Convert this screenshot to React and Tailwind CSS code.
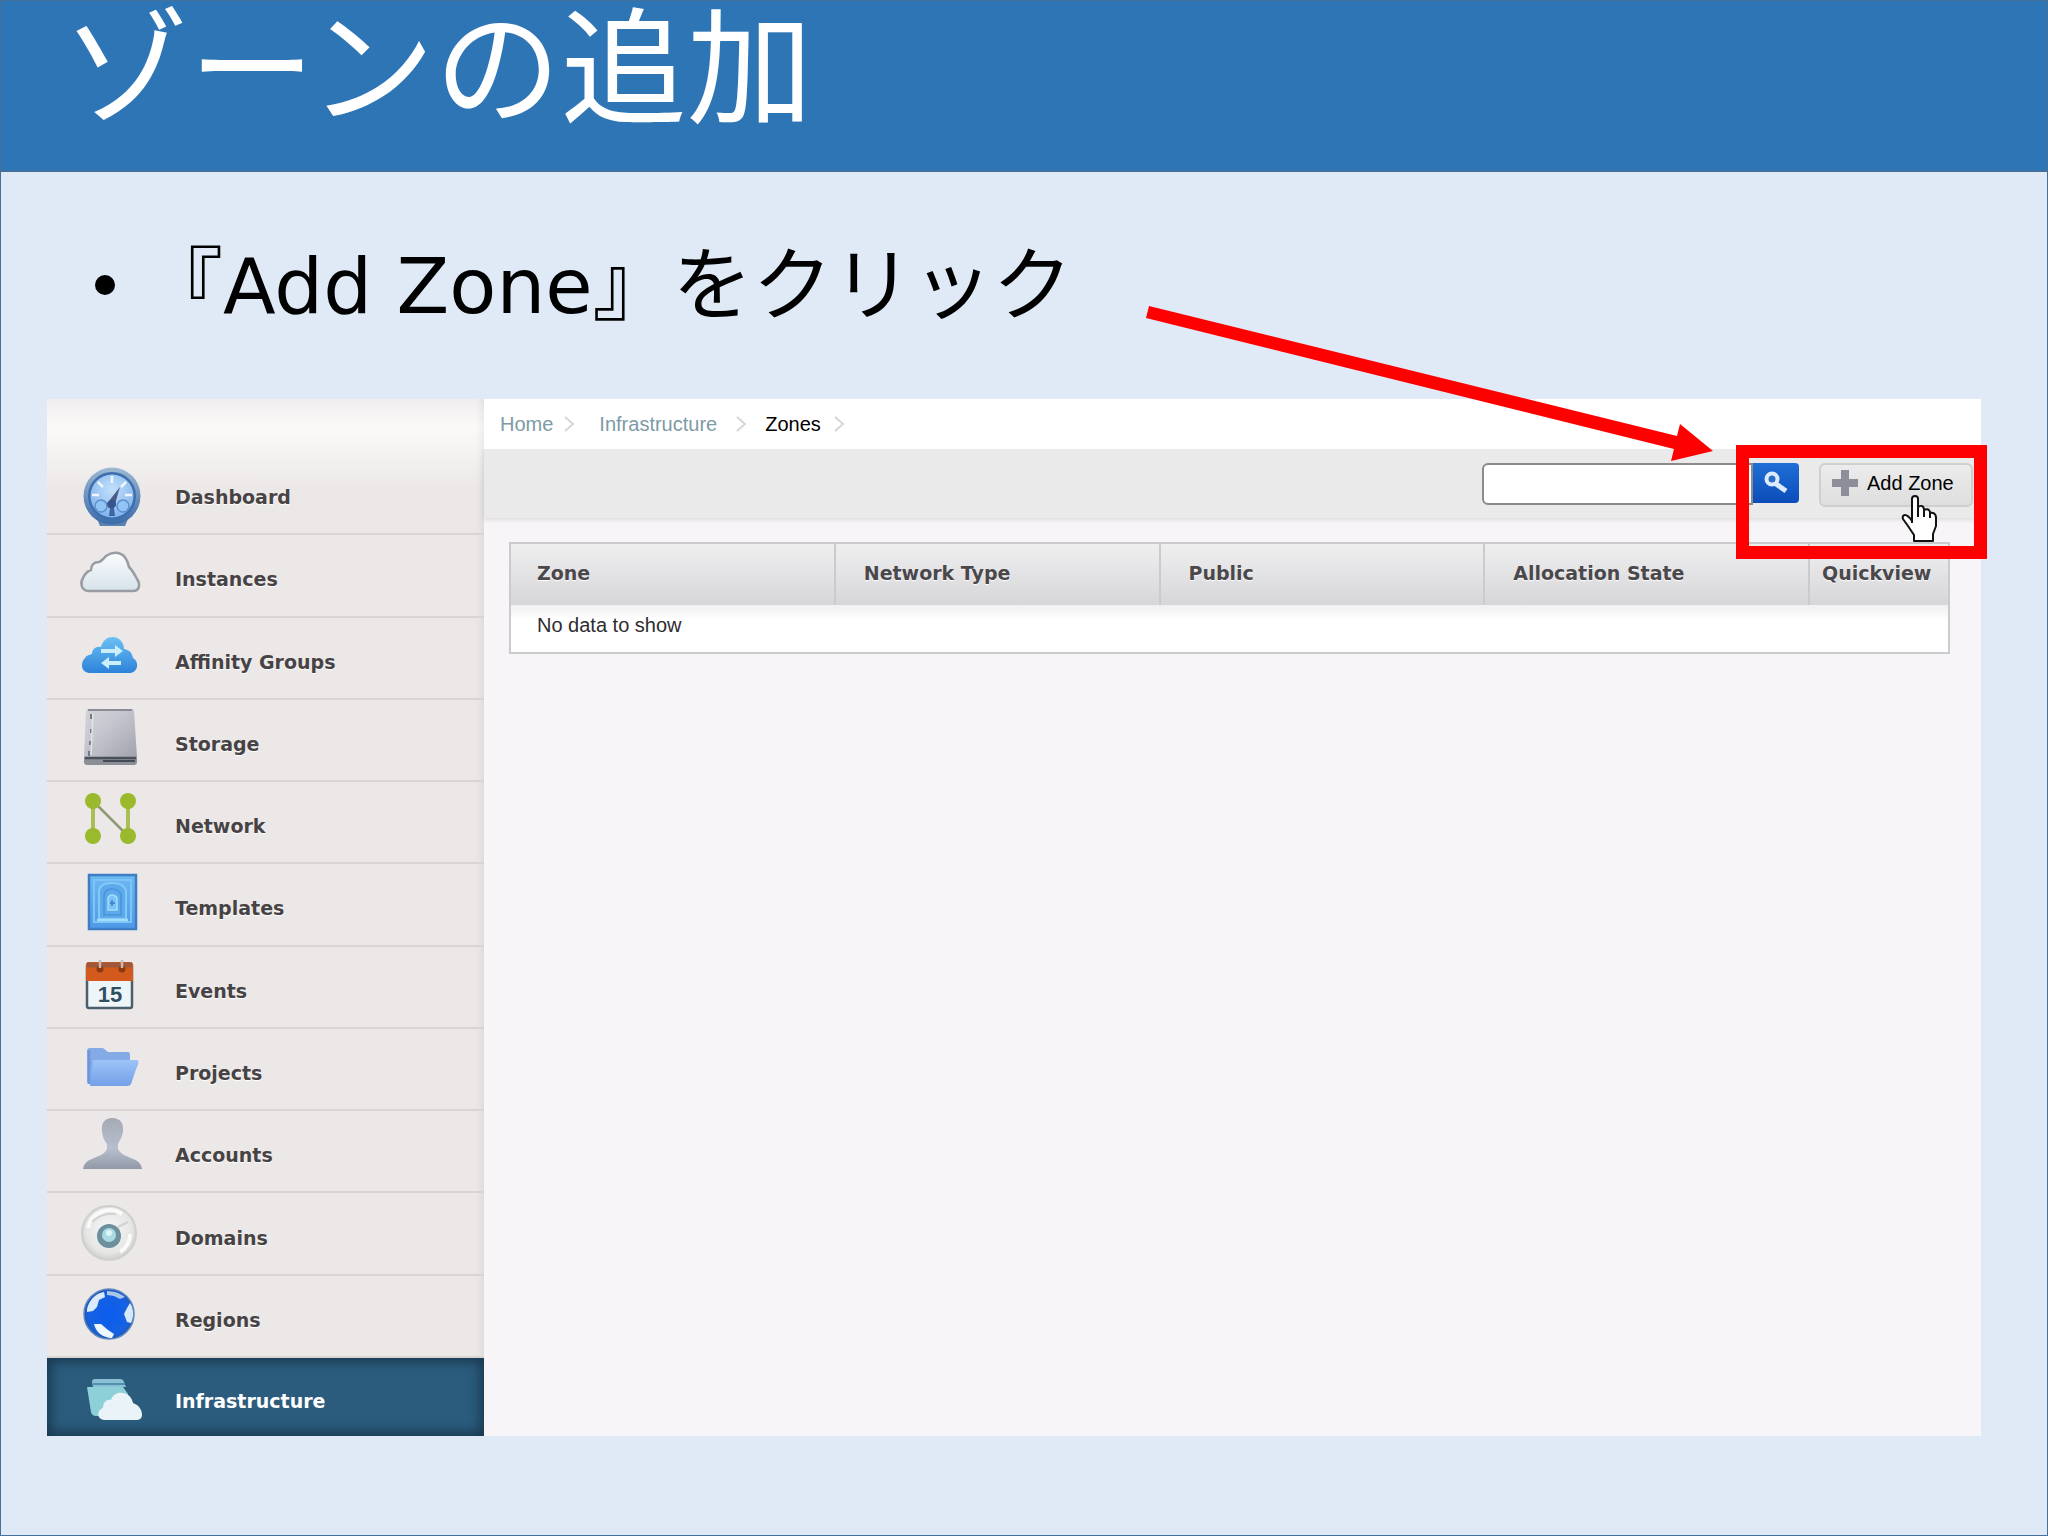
// slide: adding a zone from the CloudStack console

const menu = [
  { label: "Dashboard", Icon: DashboardIcon },
  { label: "Instances", Icon: InstancesIcon },
  { label: "Affinity Groups", Icon: AffinityIcon },
  { label: "Storage", Icon: StorageIcon },
  { label: "Network", Icon: NetworkIcon },
  { label: "Templates", Icon: TemplatesIcon },
  { label: "Events", Icon: EventsIcon },
  { label: "Projects", Icon: ProjectsIcon },
  { label: "Accounts", Icon: AccountsIcon },
  { label: "Domains", Icon: DomainsIcon },
  { label: "Regions", Icon: RegionsIcon },
  { label: "Infrastructure", Icon: InfrastructureIcon, active: true },
];

function IconBox({ children }) {
  return (
    <svg
      viewBox="0 0 64 64"
      className="size-16 shrink-0 overflow-visible"
      aria-hidden="true"
    >
      {children}
    </svg>
  );
}

function DashboardIcon() {
  return (
    <IconBox>
      <defs>
        <linearGradient id="dashRim" x1="0" y1="0" x2="0" y2="1">
          <stop offset="0" stopColor="#9db9d3" />
          <stop offset="1" stopColor="#3a6ba8" />
        </linearGradient>
        <radialGradient id="dashFace" cx="0.5" cy="0.35" r="0.7">
          <stop offset="0" stopColor="#c3e0fc" />
          <stop offset="1" stopColor="#7fb0ea" />
        </radialGradient>
      </defs>
      <path d="M18 58h31l-3 7H21z" fill="#5b82ae" />
      <circle cx="33" cy="35" r="28.5" fill="url(#dashRim)" />
      <circle cx="33" cy="35" r="24" fill="#3d6fae" />
      <circle cx="33" cy="35" r="21.5" fill="url(#dashFace)" />
      <g stroke="#eef7ff" strokeWidth="2.5">
        <path d="M33 15v7M19 21l5 5M47 21l-5 5M13 34h7M53 34h-7" />
      </g>
      <circle cx="22" cy="45" r="6" fill="#92c3f5" stroke="#5b8ecb" strokeWidth="1.5" />
      <circle cx="44" cy="45" r="6" fill="#92c3f5" stroke="#5b8ecb" strokeWidth="1.5" />
      <path d="M41 26l-5 17a4 4 0 1 1-6-3z" fill="#4c5c86" />
      <circle cx="33" cy="43" r="4" fill="#33568f" />
      <path d="M31 47h4l1 8h-6z" fill="#3a66a5" />
    </IconBox>
  );
}

function InstancesIcon() {
  return (
    <IconBox>
      <defs>
        <linearGradient id="cloudFill" x1="0" y1="0" x2="0" y2="1">
          <stop offset="0" stopColor="#fbfcfd" />
          <stop offset="1" stopColor="#d5e3ea" />
        </linearGradient>
      </defs>
      <path
        d="M9 48C2 47 1 40 4 35c2-5 5-7 8-8 0-5 3-8 8-8 3-1 5-4 7-6 8-6 17-3 20 3 2 3 2 5 3 8 4 4 6 8 8 12 4 6 2 12-4 12z"
        fill="url(#cloudFill)"
        stroke="#999ca2"
        strokeWidth="2.5"
        strokeLinejoin="round"
      />
    </IconBox>
  );
}

function AffinityIcon() {
  return (
    <IconBox>
      <defs>
        <linearGradient id="affFill" x1="0" y1="0" x2="0" y2="1">
          <stop offset="0" stopColor="#6cc0f3" />
          <stop offset="1" stopColor="#2d82da" />
        </linearGradient>
      </defs>
      <path
        d="M10 47C2 46 1 37 6 32c2-3 4-3 7-4 0-5 4-8 9-7 2-7 6-10 12-10s11 5 11 12c6 1 8 4 9 9 6 3 6 14-3 15z"
        fill="url(#affFill)"
      />
      <path
        d="M22 23h14v-4l8 6-8 6v-4H22zM42 35H30v-4l-8 6 8 6v-4h12z"
        fill="#c9eefc"
      />
    </IconBox>
  );
}

function StorageIcon() {
  return (
    <IconBox>
      <defs>
        <linearGradient id="diskFill" x1="0" y1="0" x2="1" y2="1">
          <stop offset="0" stopColor="#d2d2d8" />
          <stop offset="0.35" stopColor="#c9c9d2" />
          <stop offset="1" stopColor="#a2a3ae" />
        </linearGradient>
      </defs>
      <path d="M5 48h53v6q0 3-3 3H8q-3 0-3-3z" fill="#8c8f97" />
      <path d="M9 1h44q2 0 2 2l3 46H5L7 3q0-2 2-2z" fill="url(#diskFill)" />
      <path d="M9 2h44" stroke="#8c8d94" strokeWidth="2" />
      <path d="M6 50h51" stroke="#4b515a" strokeWidth="2.5" />
      <path d="M24 53h32" stroke="#444b56" strokeWidth="2" />
      <path d="M12 6v5M12 21v4M11 33v4M10 43v5" stroke="#777982" strokeWidth="2" />
      <path d="M14 5l-2 42" stroke="#e2e2e7" strokeWidth="1.5" />
    </IconBox>
  );
}

function NetworkIcon() {
  return (
    <IconBox>
      <path d="M14 11v35M49 11v35" stroke="#a9bf55" strokeWidth="4" />
      <path d="M14 11l35 35" stroke="#8e9a74" strokeWidth="2.5" />
      <g fill="#9ab92c">
        <circle cx="14" cy="11" r="8" />
        <circle cx="49" cy="11" r="8" />
        <circle cx="14" cy="46" r="8" />
        <circle cx="49" cy="46" r="8" />
      </g>
    </IconBox>
  );
}

function TemplatesIcon() {
  return (
    <IconBox>
      <defs>
        <linearGradient id="tplFill" x1="0" y1="0" x2="0" y2="1">
          <stop offset="0" stopColor="#6bb9f2" />
          <stop offset="1" stopColor="#4f9ae8" />
        </linearGradient>
      </defs>
      <rect x="10" y="3" width="47" height="54" fill="url(#tplFill)" stroke="#3e7cc4" strokeWidth="2.5" />
      <rect x="15" y="8" width="37" height="42" fill="none" stroke="#7fc4f6" strokeWidth="2" />
      <path d="M20 47V19q1-8 13-8t14 8v28z" fill="#5ca9ec" stroke="#84c8f6" strokeWidth="2" />
      <path d="M25 43V23q1-6 8-6t9 6v20z" fill="none" stroke="#4a92da" strokeWidth="1.5" />
      <path d="M29 38V26q1-3 4-3t5 3v12z" fill="#79c4f6" stroke="#a5dcfa" strokeWidth="1.5" />
      <path d="M33 28v6M31 31h5" stroke="#3c7dc8" strokeWidth="1.5" />
      <path d="M18 48h31" stroke="#a2ddfb" strokeWidth="2.5" />
    </IconBox>
  );
}

function EventsIcon() {
  return (
    <IconBox>
      <rect x="8" y="9" width="45" height="44" rx="2" fill="#eef5f8" stroke="#4a5e6c" strokeWidth="2.5" />
      <path d="M7 26V10q0-3 3-3h41q3 0 3 3v16z" fill="#d35a1c" />
      <path d="M8 10h45" stroke="#a1583a" strokeWidth="5" />
      <circle cx="21" cy="14" r="3.5" fill="#8c3a14" />
      <circle cx="43" cy="14" r="3.5" fill="#8c3a14" />
      <path d="M21 5v8M43 5v8" stroke="#c9b9b2" strokeWidth="2.5" />
      <text
        x="31"
        y="47"
        textAnchor="middle"
        fill="#2f4f63"
        className="font-['Liberation_Sans',sans-serif] text-[22px] font-bold"
      >
        15
      </text>
    </IconBox>
  );
}

function ProjectsIcon() {
  return (
    <IconBox>
      <defs>
        <linearGradient id="folderFill" x1="0" y1="0" x2="0" y2="1">
          <stop offset="0" stopColor="#9cc4f7" />
          <stop offset="1" stopColor="#74a0e8" />
        </linearGradient>
      </defs>
      <path d="M8 14q0-3 3-3h13l5 4h20q2 0 2 3v6h6q3 0 2 3l-8 20H11q-3 0-3-3z" fill="#84abe6" />
      <path d="M14 23h44q2 0 1 3l-7 21q-1 2-4 2H11z" fill="url(#folderFill)" />
      <path d="M10 13v34" stroke="#6d96dc" strokeWidth="2.5" />
    </IconBox>
  );
}

function AccountsIcon() {
  return (
    <IconBox>
      <defs>
        <linearGradient id="userFill" x1="0" y1="0" x2="0" y2="1">
          <stop offset="0" stopColor="#a5a9b4" />
          <stop offset="0.6" stopColor="#b6bfce" />
          <stop offset="1" stopColor="#9298a6" />
        </linearGradient>
      </defs>
      <path
        d="M33-1c8 0 12 5 11 13-1 7-3 9-5 13v5c3 6 9 7 15 10 6 2 8 5 9 10H4c1-5 3-8 9-10 6-3 12-4 15-10v-5c-3-4-4-6-5-13-1-8 3-13 10-13z"
        fill="url(#userFill)"
      />
    </IconBox>
  );
}

function DomainsIcon() {
  return (
    <IconBox>
      <defs>
        <radialGradient id="domFill" cx="0.5" cy="0.45" r="0.6">
          <stop offset="0" stopColor="#f6f7f7" />
          <stop offset="0.7" stopColor="#e6e6e5" />
          <stop offset="1" stopColor="#c4c4c4" />
        </radialGradient>
      </defs>
      <circle cx="30" cy="31" r="27" fill="url(#domFill)" stroke="#cfcfce" strokeWidth="2" />
      <path d="M9 26a22 22 0 0 1 34-14M51 32a21 21 0 0 1-10 18" fill="none" stroke="#fafafa" strokeWidth="4" />
      <path d="M13 20q10-10 24-8M39 25l10-5" fill="none" stroke="#d2d2d0" strokeWidth="2" />
      <circle cx="30" cy="34" r="12" fill="#6d8f9e" />
      <circle cx="30" cy="33" r="7" fill="#abdbe2" />
      <circle cx="30" cy="31" r="3" fill="#dcf5f7" />
    </IconBox>
  );
}

function RegionsIcon() {
  return (
    <IconBox>
      <defs>
        <radialGradient id="globeFill" cx="0.5" cy="0.5" r="0.55">
          <stop offset="0" stopColor="#0b5cf0" />
          <stop offset="0.75" stopColor="#1662e2" />
          <stop offset="1" stopColor="#265197" />
        </radialGradient>
      </defs>
      <circle cx="30" cy="30" r="25" fill="url(#globeFill)" stroke="#5f87bd" strokeWidth="1.5" />
      <path d="M8 25C10 16 17 9 25 8l1 5-6 3-2 7-4 4-6 1z" fill="#dcebfa" />
      <path d="M28 7c7 0 13 2 18 6l-5 2-6-3-7-1z" fill="#a9c6ec" />
      <path d="M51 19c4 6 4 14 1 20l-4-1-3-8 3-6z" fill="#d6e8fa" />
      <path d="M15 40l7 0 7 6 6 4-2 4c-8 0-16-5-18-14z" fill="#eef7fb" />
    </IconBox>
  );
}

function InfrastructureIcon() {
  return (
    <IconBox>
      <path d="M13 17q0-3 3-3h25q3 0 4 3l2 5H14z" fill="#8bc0d4" />
      <path d="M8 22h36l5 7v22H17q-4 0-5-4z" fill="#8ed0d8" />
      <path d="M14 19h32" stroke="#4d93ad" strokeWidth="2" />
      <path
        d="M25 55c-8-1-7-10-1-12 0-6 4-9 8-8 2-6 7-8 12-7 6 1 9 5 10 10 6 2 9 7 9 12 0 4-3 5-6 5z"
        fill="#e9f3f8"
      />
    </IconBox>
  );
}

function Sidebar() {
  return (
    <nav className="flex w-[437px] shrink-0 flex-col bg-linear-to-b from-[#f0eeee] via-[#fcf9f9] via-[28px] to-[#ece8e8] to-[90px] pt-[54px] shadow-[inset_-8px_0_8px_-6px_rgba(0,0,0,0.08)]">
      {menu.map(({ label, Icon, active }) => (
        <a
          key={label}
          href="#"
          className={
            active
              ? "flex h-[78px] items-center gap-8 bg-[#2b5c7d] pl-8 text-white shadow-[inset_0_0_12px_4px_rgba(20,45,65,0.75)]"
              : "flex flex-1 items-center gap-8 border-b-2 border-[#d9d5d5] pl-8 text-[#474344] [text-shadow:0_1px_1px_#fff]"
          }
        >
          <Icon />
          <span className="pt-2 text-[19px] leading-6 font-bold">{label}</span>
        </a>
      ))}
    </nav>
  );
}

function Chevron() {
  return (
    <svg viewBox="0 0 12 16" className="h-4 w-3" aria-hidden="true">
      <path d="M2 1l8 7-8 7" fill="none" stroke="#d3d7da" strokeWidth="2" />
    </svg>
  );
}

function Breadcrumbs() {
  return (
    <div className="flex h-[50px] items-center bg-white pl-4 font-['Liberation_Sans',sans-serif] text-xl text-[#7d9aa6]">
      <a href="#">Home</a>
      <span className="pr-6 pl-2.5">
        <Chevron />
      </span>
      <a href="#">Infrastructure</a>
      <span className="px-[18px]">
        <Chevron />
      </span>
      <span className="text-black">Zones</span>
      <span className="pl-3">
        <Chevron />
      </span>
    </div>
  );
}

function Toolbar() {
  return (
    <div className="flex h-[69px] items-start justify-end bg-[#eaeaeb] pt-3.5 pr-2 shadow-[0_2px_4px_rgba(0,0,0,0.1)]">
      <input
        type="text"
        aria-label="Search"
        className="h-[42px] w-[271px] rounded-l-md border-2 border-[#8b8b8d] bg-white px-2 text-xl outline-none"
      />
      <button
        type="button"
        aria-label="Submit search"
        className="flex h-10 w-[46px] items-center justify-center rounded-r-sm bg-linear-to-b from-[#1f6fd6] to-[#0d4cb8]"
      >
        <svg viewBox="0 0 24 24" className="size-6" aria-hidden="true">
          <circle cx="8" cy="8" r="5.5" fill="#2f6cc4" stroke="#dcebff" strokeWidth="4" />
          <path d="M12 13l10 7" stroke="#dcebff" strokeWidth="5" />
        </svg>
      </button>
      <button
        type="button"
        className="ml-5 flex h-11 w-[154px] items-center gap-2 rounded-md border-2 border-[#cfcfd0] bg-linear-to-b from-[#ececec] to-[#dededf] pb-1 pl-2.5 font-['Liberation_Sans',sans-serif] text-xl whitespace-nowrap text-black"
      >
        <svg viewBox="0 0 28 28" className="size-7 shrink-0" aria-hidden="true">
          <path d="M10 1h8v9h9v8h-9v9h-8v-9H1v-8h9z" fill="#8d8e9a" />
        </svg>
        Add Zone
      </button>
    </div>
  );
}

function ZoneTable() {
  return (
    <table className="w-full table-fixed border-collapse border-2 border-[#cbcacc] text-left">
      <thead>
        <tr className="h-[62px] bg-linear-to-b from-[#f0eff0] to-[#d6d5d8] text-[19px] leading-6 text-[#4a484b] [text-shadow:0_1px_1px_#fff]">
          <th className="pb-1 pl-[26px]">Zone</th>
          <th className="border-l-2 border-[#cbcacc] pb-1 pl-7">Network Type</th>
          <th className="border-l-2 border-[#cbcacc] pb-1 pl-7">Public</th>
          <th className="border-l-2 border-[#cbcacc] pb-1 pl-7">Allocation State</th>
          <th className="w-[140px] border-l-2 border-[#cbcacc] pb-1 pl-3">Quickview</th>
        </tr>
      </thead>
      <tbody>
        <tr className="h-12 bg-linear-to-b from-[#f0eff1] to-white to-30% font-['Liberation_Sans',sans-serif] text-xl text-[#2e2c2f]">
          <td colSpan={5} className="pb-2 pl-[26px]">
            No data to show
          </td>
        </tr>
      </tbody>
    </table>
  );
}

// red arrow, frame and hand cursor drawn over the console
function Callout() {
  return (
    <>
      <svg
        viewBox="0 0 580 170"
        className="pointer-events-none absolute -top-[99px] right-[261px] w-[580px]"
        aria-hidden="true"
      >
        <path d="M9 6L537 136L540 124L573 151L531 161L534 149L6 18Z" fill="#fe0000" />
      </svg>
      <div className="pointer-events-none absolute top-[46px] -right-1.5 h-[114px] w-[251px] border-[13px] border-[#fe0000]" />
      <svg
        viewBox="0 0 38 48"
        className="pointer-events-none absolute top-24 right-[42px] h-12 w-[38px]"
        aria-hidden="true"
      >
        <path
          d="M11 28V4q0-3 3-3t3 3v16V13q0-3 3-3t3 3v8-5q0-3 3-2t3 3v6-4q0-2 3-1t3 3v12l-3 8v6H13v-6L7 31 2 24q-1-4 2-4 3 0 7 6z"
          fill="#fff"
        />
        <path
          d="M11 28V4q0-3 3-3t3 3v18M17 12q5-3 6 2v8M23 15q5-2 6 2v6M29 18q5-1 6 4v9l-3 8v7H13v-6L7 31 2 24q-1-4 2-4 3 0 7 6"
          fill="none"
          stroke="#111"
          strokeWidth="2"
          strokeLinejoin="round"
        />
      </svg>
    </>
  );
}

export default function App() {
  return (
    <div className="min-h-screen border border-[#41719c] bg-[#dfeaf6] font-['DejaVu_Sans','Noto_Sans_CJK_JP',sans-serif]">
      <header className="border-b-2 border-[#41719c] bg-[#2e75b6] px-[62px] pb-[29px]">
        <h1 className="font-['Liberation_Sans','Noto_Sans_CJK_JP',sans-serif] text-[126px] leading-[140px] text-white">
          ゾーンの追加
        </h1>
      </header>

      <main className="pr-[66px] pb-[99px] pl-[46px]">
        <ul className="pt-[58px] pb-[73px] pl-12">
          <li className="flex items-center font-['Noto_Sans_CJK_JP',sans-serif] text-[80px] leading-[96px] text-black">
            <span className="mt-3.5 mr-7 size-5 rounded-full bg-black" />
            <span>
              『
              <span className="font-['DejaVu_Sans',sans-serif] text-[77px] leading-none">
                Add Zone
              </span>
              』をクリック
            </span>
          </li>
        </ul>

        <div className="relative flex min-h-[1037px] bg-[#f7f5f8]">
          <Sidebar />
          <section className="min-w-0 flex-1">
            <Breadcrumbs />
            <Toolbar />
            <div className="pt-6 pr-[31px] pl-[25px]">
              <ZoneTable />
            </div>
          </section>
          <Callout />
        </div>
      </main>
    </div>
  );
}
